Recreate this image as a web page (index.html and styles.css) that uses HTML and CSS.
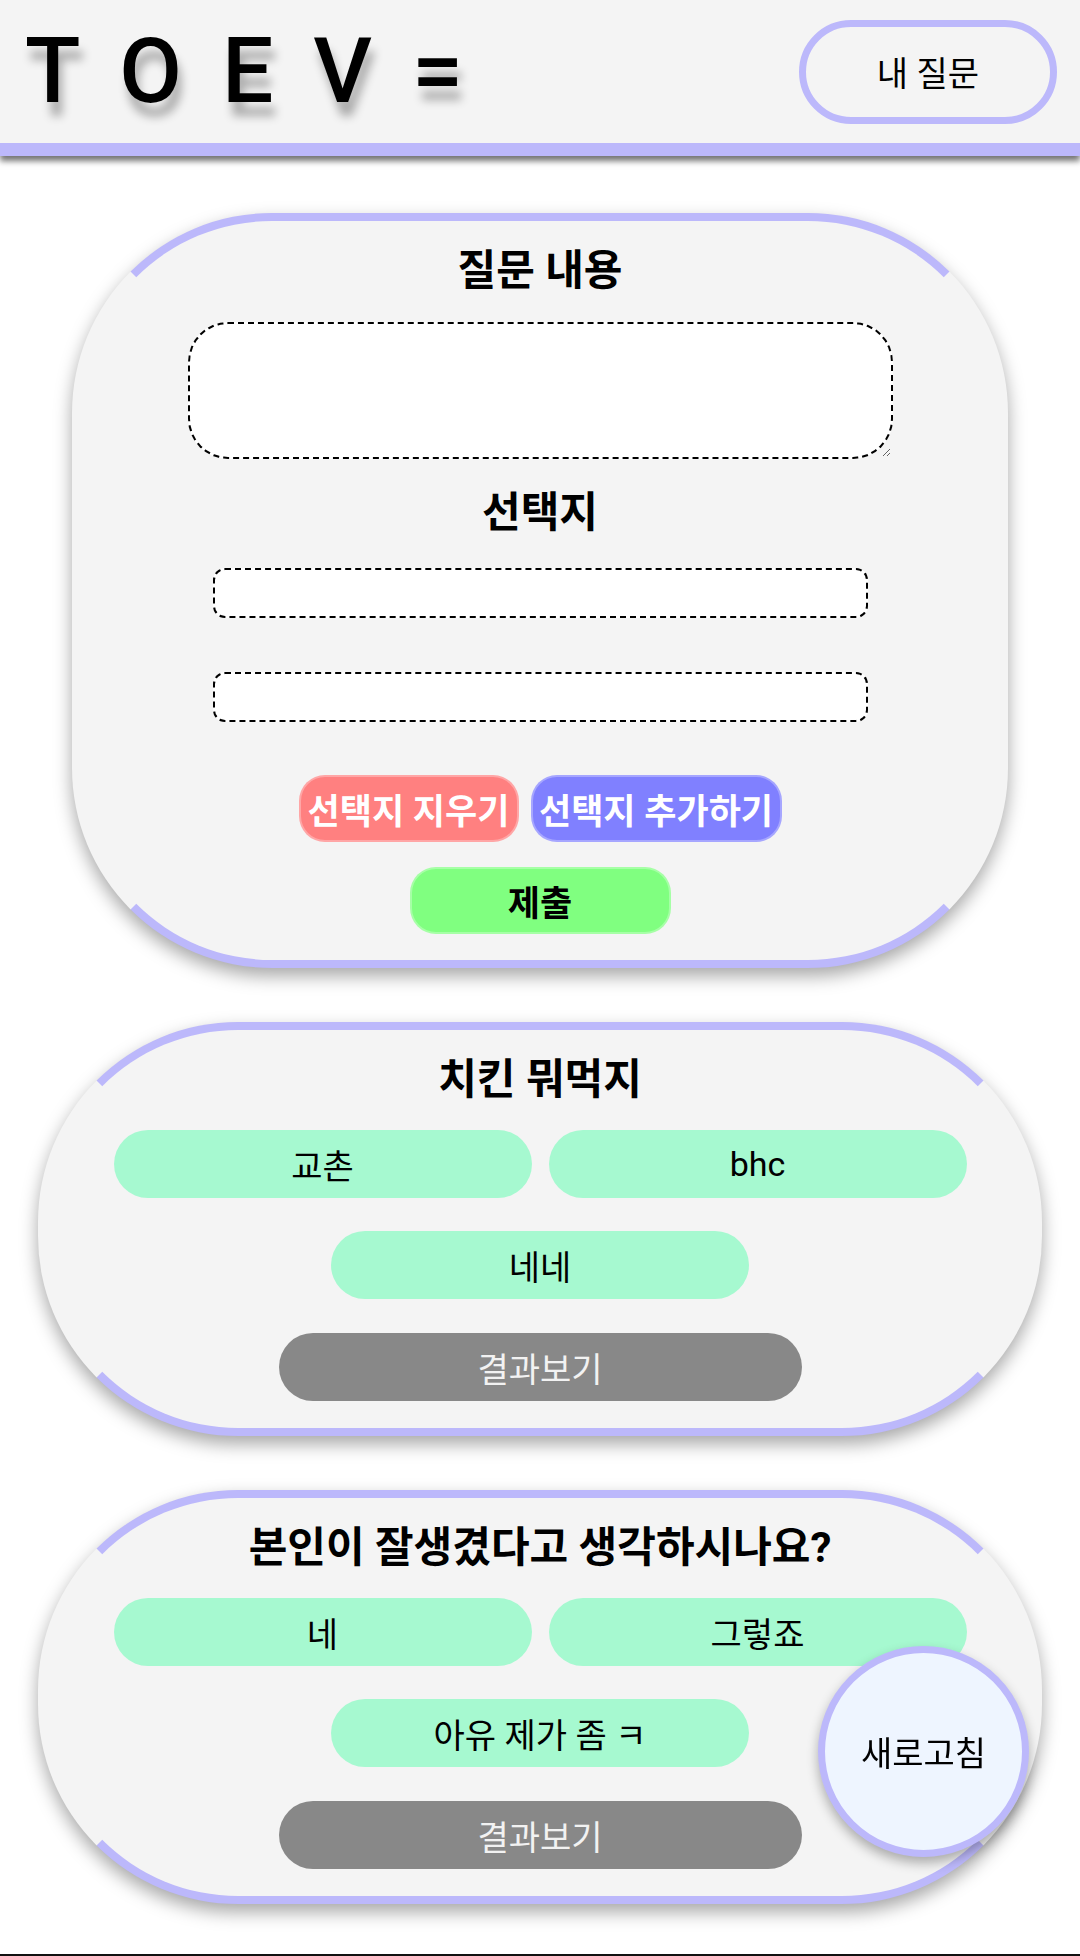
FILE: index.html
```html
<!DOCTYPE html>
<html lang="ko">
<head>
    <meta charset="UTF-8">
    <meta name="viewport" content="width=device-width, initial-scale=1.0">
    <title>TOEV=</title>
    <link rel="stylesheet" href="styles.css">
</head>
<body>
    <header class="topbar">
        <h1 class="logo">TOEV=</h1>
        <button class="my-btn">내 질문</button>
    </header>

    <main class="list">
        <!-- 질문 작성 -->
        <section class="card write-card">
            <h2 class="card-title">질문 내용</h2>
            <textarea class="question-input"></textarea>
            <h2 class="card-title">선택지</h2>
            <div class="choice-list">
                <input type="text" class="choice-input">
                <input type="text" class="choice-input">
            </div>
            <div class="btn-row">
                <button class="btn btn-remove">선택지 지우기</button>
                <button class="btn btn-add">선택지 추가하기</button>
            </div>
            <button class="btn btn-submit">제출</button>
        </section>

        <!-- 질문 목록 -->
        <section class="card poll">
            <h2 class="card-title">치킨 뭐먹지</h2>
            <div class="options">
                <button class="option">교촌</button>
                <button class="option">bhc</button>
                <button class="option">네네</button>
            </div>
            <button class="result-btn">결과보기</button>
        </section>

        <section class="card poll">
            <h2 class="card-title">본인이 잘생겼다고 생각하시나요?</h2>
            <div class="options">
                <button class="option">네</button>
                <button class="option">그렇죠</button>
                <button class="option">아유 제가 좀 ㅋ</button>
            </div>
            <button class="result-btn">결과보기</button>
        </section>
    </main>

    <footer class="bottom-line"></footer>

    <button class="refresh-btn">새로고침</button>
</body>
</html>
```

FILE: styles.css
```css
body {
    margin: 0;
    background: #ffffff;
    color: #000000;
    font-family: Roboto, "Noto Sans CJK KR", sans-serif;
}
button, input, textarea {
    font-family: inherit;
}
.topbar {
    height: 143px;
    display: flex;
    align-items: center;
    justify-content: space-between;
    padding: 0 23px 0 25px;
    background: #f4f4f4;
    border-bottom: 13px solid #bcb8fb;
    box-shadow: 0 5px 6px rgba(0, 0, 0, 0.55);
}
.logo {
    margin: 0;
    font-size: 91px;
    font-weight: 500;
    letter-spacing: 40px;
    line-height: 1;
    text-shadow: 4px 14px 10px rgba(0, 0, 0, 0.3);
}
.my-btn {
    width: 258px;
    height: 104px;
    border: 7px solid #bcb8fb;
    border-radius: 52px;
    background: #f4f4f4;
    font-size: 34px;
    color: #000;
}
.list {
    padding-top: 57px;
    display: flex;
    flex-direction: column;
    align-items: center;
    gap: 54px;
}
.card {
    box-sizing: border-box;
    display: flex;
    flex-direction: column;
    align-items: center;
    background: #f4f4f4;
    border: 8px solid transparent;
    border-top-color: #bcb8fb;
    border-bottom-color: #bcb8fb;
    border-radius: 200px;
    box-shadow: 0 8px 18px rgba(0, 0, 0, 0.35);
}
.card-title {
    margin: 0;
    font-size: 42px;
    font-weight: 700;
    line-height: 56px;
    white-space: nowrap;
}
.write-card {
    width: 936px;
    padding: 22px 0 26px;
}
.question-input {
    box-sizing: border-box;
    width: 705px;
    height: 137px;
    margin: 23px 0 26px;
    border: 2px dashed #000;
    border-radius: 40px;
    background: #fff;
}
.choice-list {
    display: flex;
    flex-direction: column;
    gap: 54px;
    margin-top: 27px;
}
.choice-input {
    box-sizing: border-box;
    width: 655px;
    height: 50px;
    border: 2px dashed #000;
    border-radius: 12px;
    background: #fff;
}
.btn-row {
    display: flex;
    gap: 12px;
    margin-top: 53px;
}
.btn {
    height: 67px;
    border: 2px solid rgba(255, 255, 255, 0.3);
    border-radius: 26px;
    font-size: 35px;
    font-weight: 700;
    color: #fff;
    padding: 0;
    white-space: nowrap;
}
.btn-remove {
    width: 220px;
    background: #ff8080;
}
.btn-add {
    width: 251px;
    background: #8080ff;
}
.btn-submit {
    width: 261px;
    margin-top: 25px;
    background: #80ff80;
    color: #000;
}
.poll {
    width: 1004px;
    padding: 22px 0 27px;
}
.options {
    display: flex;
    flex-wrap: wrap;
    justify-content: center;
    column-gap: 17px;
    row-gap: 33px;
    width: 860px;
    margin-top: 22px;
}
.option {
    width: 418px;
    height: 68px;
    border: none;
    border-radius: 34px;
    background: #a6f9d0;
    font-size: 34px;
    color: #000;
}
.result-btn {
    width: 523px;
    height: 68px;
    margin-top: 34px;
    border: none;
    border-radius: 34px;
    background: #888888;
    font-size: 34px;
    color: #f2f2f2;
}
.bottom-line {
    height: 6px;
    margin-top: 50px;
    background: #111;
}
.refresh-btn {
    position: fixed;
    right: 51px;
    bottom: 99px;
    width: 211px;
    height: 211px;
    border: 7px solid #bcb8fb;
    border-radius: 50%;
    background: #eef5ff;
    font-size: 34px;
    color: #000;
    box-shadow: 0 6px 12px rgba(0, 0, 0, 0.3);
}
```
